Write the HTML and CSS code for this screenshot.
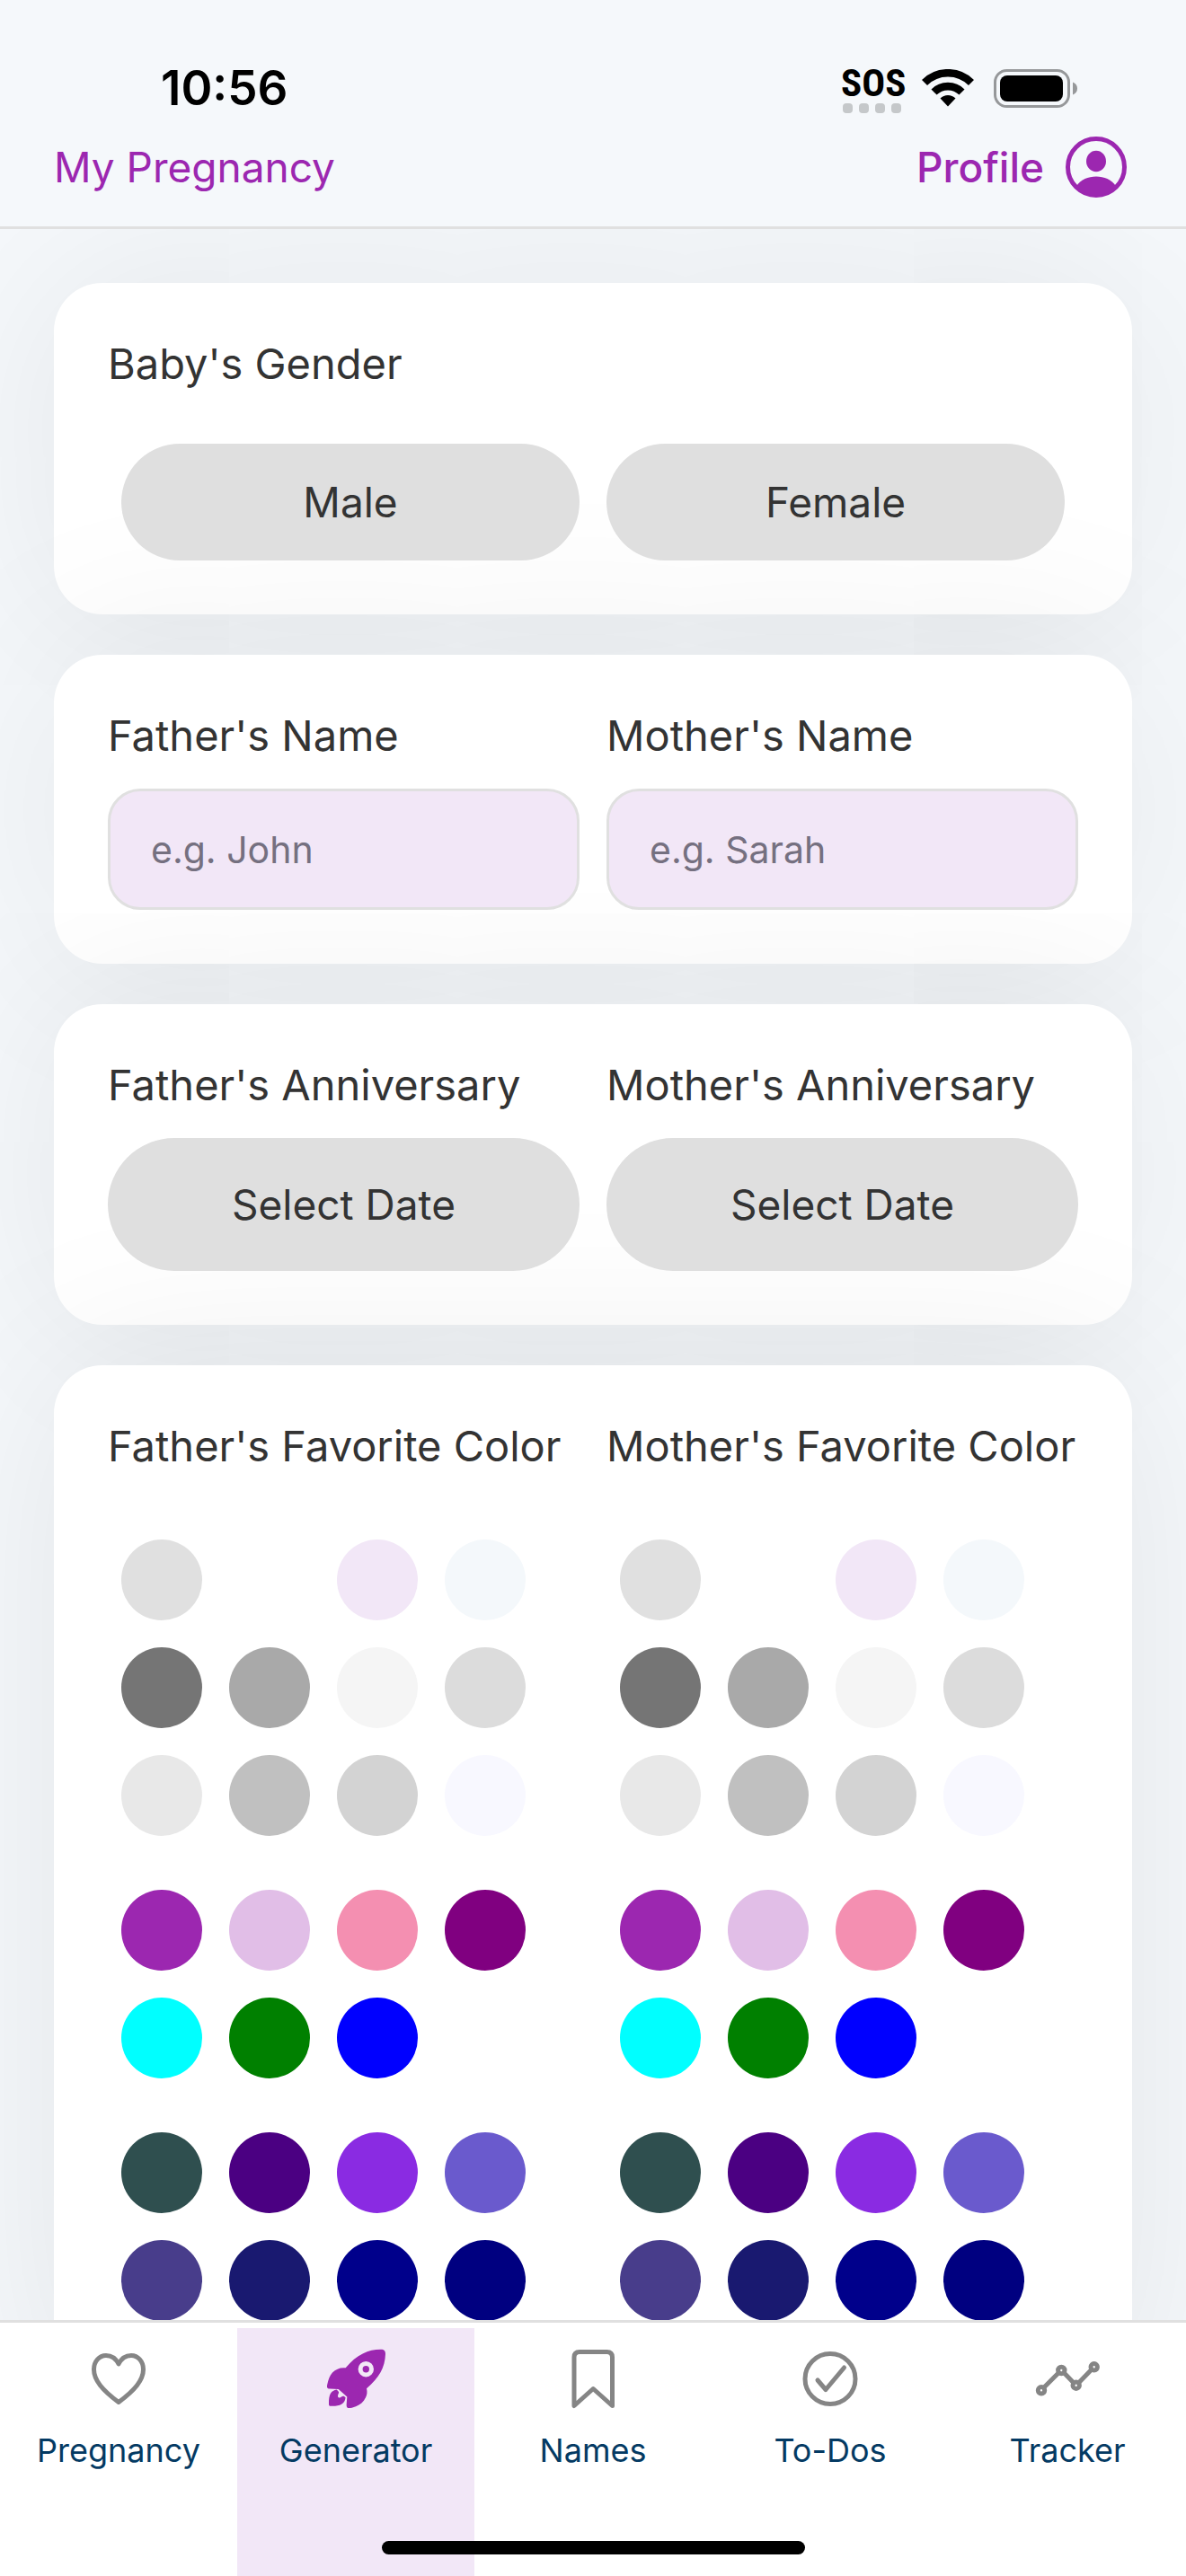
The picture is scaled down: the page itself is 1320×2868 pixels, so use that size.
FILE: index.html
```html
<!DOCTYPE html>
<html lang="en">
<head>
  <meta charset="utf-8">
  <meta name="viewport" content="width=device-width, initial-scale=1">
  <title>Generator</title>
  <link rel="stylesheet" href="styles.css">
</head>
<body>
<div class="app">
  <header class="header">
    <div class="status">
      <span class="clock">10:56</span>
      <div class="status-icons">
        <div class="sos">
          <span>SOS</span>
          <div class="dots"><i></i><i></i><i></i><i></i></div>
        </div>
        <svg class="wifi" width="58" height="42" viewBox="0 0 58 42">
          <path d="M3 15a36.8 36.8 0 0 1 52 0M13.5 25.5a22 22 0 0 1 31 0" fill="none" stroke="#000" stroke-width="8.6"/>
          <path d="M20.5 32.5a12 12 0 0 1 17 0L29 41.500z"/>
        </svg>
        <svg class="battery" width="94" height="43" viewBox="0 0 94 43">
          <rect x="1.500" y="1.500" width="82" height="40" rx="13" fill="none" stroke="#96989a" stroke-width="3"/>
          <rect x="7" y="7" width="70" height="29" rx="8"/>
          <path d="M88 14.500q5 2 5 7t-5 7z" fill="#96989a"/>
        </svg>
      </div>
    </div>
    <nav class="topnav">
      <a href="#">My Pregnancy</a>
      <a href="#" class="profile">Profile
        <svg width="68" height="68" viewBox="0 0 68 68">
          <circle cx="34" cy="34" r="31.500" fill="none" stroke="#9c27b0" stroke-width="5"/>
          <ellipse cx="34" cy="27.500" rx="11" ry="11.800" fill="#9c27b0"/>
          <path d="M12.500 54.500C17 48 25 44.500 34 44.500s17 3.500 21.500 10C50 62 42 66 34 66s-16-4-21.500-11.500z" fill="#9c27b0"/>
        </svg>
      </a>
    </nav>
  </header>

  <main class="content">
    <section class="card">
      <h2>Baby's Gender</h2>
      <div class="cols gender">
        <button class="pill">Male</button>
        <button class="pill">Female</button>
      </div>
    </section>

    <section class="card cols">
      <div>
        <label for="father-name">Father's Name</label>
        <input type="text" id="father-name" placeholder="e.g. John">
      </div>
      <div>
        <label for="mother-name">Mother's Name</label>
        <input type="text" id="mother-name" placeholder="e.g. Sarah">
      </div>
    </section>

    <section class="card cols">
      <div>
        <label for="father-date">Father's Anniversary</label>
        <button class="pill date" id="father-date">Select Date</button>
      </div>
      <div>
        <label for="mother-date">Mother's Anniversary</label>
        <button class="pill date" id="mother-date">Select Date</button>
      </div>
    </section>

    <section class="card cols">
      <div>
        <h2>Father's Favorite Color</h2>
        <div class="palettes">
          <div class="palette">
            <button class="swatch gray88" aria-label="Light gray"></button>
            <button class="swatch white" aria-label="White"></button>
            <button class="swatch lilac" aria-label="Lilac"></button>
            <button class="swatch ice" aria-label="Ice"></button>
            <button class="swatch gray46" aria-label="Gray"></button>
            <button class="swatch darkgray" aria-label="Dark gray"></button>
            <button class="swatch whitesmoke" aria-label="White smoke"></button>
            <button class="swatch gainsboro" aria-label="Gainsboro"></button>
            <button class="swatch gray91" aria-label="Platinum"></button>
            <button class="swatch silver" aria-label="Silver"></button>
            <button class="swatch lightgray" aria-label="Pale gray"></button>
            <button class="swatch ghostwhite" aria-label="Ghost white"></button>
          </div>
          <div class="palette">
            <button class="swatch primary" aria-label="Violet"></button>
            <button class="swatch orchid" aria-label="Light purple"></button>
            <button class="swatch pink" aria-label="Pink"></button>
            <button class="swatch purple" aria-label="Purple"></button>
            <button class="swatch cyan" aria-label="Cyan"></button>
            <button class="swatch green" aria-label="Green"></button>
            <button class="swatch blue" aria-label="Blue"></button>
          </div>
          <div class="palette">
            <button class="swatch slategray" aria-label="Dark slate gray"></button>
            <button class="swatch indigo" aria-label="Indigo"></button>
            <button class="swatch blueviolet" aria-label="Blue violet"></button>
            <button class="swatch slateblue" aria-label="Slate blue"></button>
            <button class="swatch darkslateblue" aria-label="Dark slate blue"></button>
            <button class="swatch midnight" aria-label="Midnight blue"></button>
            <button class="swatch darkblue" aria-label="Dark blue"></button>
            <button class="swatch navy" aria-label="Navy"></button>
          </div>
        </div>
      </div>
      <div>
        <h2>Mother's Favorite Color</h2>
        <div class="palettes">
          <div class="palette">
            <button class="swatch gray88" aria-label="Light gray"></button>
            <button class="swatch white" aria-label="White"></button>
            <button class="swatch lilac" aria-label="Lilac"></button>
            <button class="swatch ice" aria-label="Ice"></button>
            <button class="swatch gray46" aria-label="Gray"></button>
            <button class="swatch darkgray" aria-label="Dark gray"></button>
            <button class="swatch whitesmoke" aria-label="White smoke"></button>
            <button class="swatch gainsboro" aria-label="Gainsboro"></button>
            <button class="swatch gray91" aria-label="Platinum"></button>
            <button class="swatch silver" aria-label="Silver"></button>
            <button class="swatch lightgray" aria-label="Pale gray"></button>
            <button class="swatch ghostwhite" aria-label="Ghost white"></button>
          </div>
          <div class="palette">
            <button class="swatch primary" aria-label="Violet"></button>
            <button class="swatch orchid" aria-label="Light purple"></button>
            <button class="swatch pink" aria-label="Pink"></button>
            <button class="swatch purple" aria-label="Purple"></button>
            <button class="swatch cyan" aria-label="Cyan"></button>
            <button class="swatch green" aria-label="Green"></button>
            <button class="swatch blue" aria-label="Blue"></button>
          </div>
          <div class="palette">
            <button class="swatch slategray" aria-label="Dark slate gray"></button>
            <button class="swatch indigo" aria-label="Indigo"></button>
            <button class="swatch blueviolet" aria-label="Blue violet"></button>
            <button class="swatch slateblue" aria-label="Slate blue"></button>
            <button class="swatch darkslateblue" aria-label="Dark slate blue"></button>
            <button class="swatch midnight" aria-label="Midnight blue"></button>
            <button class="swatch darkblue" aria-label="Dark blue"></button>
            <button class="swatch navy" aria-label="Navy"></button>
          </div>
        </div>
      </div>
    </section>
  </main>

  <nav class="tabs">
    <a href="#">
      <svg viewBox="0 0 78 78"><path d="M39 65.500C21 52 11.500 41 11.500 29c0-9 6-15.500 13.500-15.500 6 0 11 3.500 14 9.500 3-6 8-9.500 14-9.500 7.500 0 13.500 6.500 13.500 15.500 0 12-9.500 23-27.500 36.500z"/></svg>
      Pregnancy
    </a>
    <a href="#" class="active">
      <svg viewBox="0 0 78 78">
        <path class="fill" fill-rule="evenodd" d="M27.700 27.300C40 12 54 6.500 67 6.700c3.500 0 5 1.500 5 5C71.500 27 65 38 51 50.300c1 4 .500 7-1 10-2.500 5-6 8-11 10-4 1.700-7.500 2-8.700 1.700-1.800-.500-1.800-3-1.500-6l.500-6.500L19.700 51 10 50.500c-3 0-3.500-1.500-2.700-5C8.500 40 10 36 13 32.500c4-4 9-6 14.700-5.200zM50.300 20a8.700 8.700 0 1 0 0 17.400 8.700 8.700 0 0 0 0-17.400z"/>
        <circle class="fill" cx="50.300" cy="28.700" r="3.700"/>
        <path class="fill" d="M17.700 51.500c-6 1-9 5-8.700 16 0 2 .500 2.500 3 2.300 9 .200 14.500-1.800 15.600-9.300-1.300-2-3-2.500-4.600-1-1.500 1.500-4 1.500-4-1 0-2 1.500-3 1-4.500z"/>
      </svg>
      Generator
    </a>
    <a href="#">
      <svg viewBox="0 0 78 78"><path d="M18 69.500V15.500q0-6 6-6h30.500q6 0 6 6v54L39.200 50.500z"/></svg>
      Names
    </a>
    <a href="#">
      <svg viewBox="0 0 78 78"><circle cx="39" cy="39.500" r="28"/><path d="M25 41l9 10.500 20.500-24.500"/></svg>
      To-Dos
    </a>
    <a href="#">
      <svg viewBox="0 0 78 78">
        <path d="M12.500 49.500l17-17M35 32.500l11 11.500M51.500 44L66 29"/>
        <circle cx="10" cy="52.300" r="3.700"/><circle cx="32.300" cy="30" r="3.700"/><circle cx="48.700" cy="46.700" r="3.700"/><circle cx="68.700" cy="26.300" r="3.700"/>
      </svg>
      Tracker
    </a>
    <div class="home-bar"></div>
  </nav>
</div>
</body>
</html>
```

FILE: styles.css
```css
* { box-sizing: border-box; }

body {
  margin: 0;
  background: #f5f8fb;
  color: #333;
  font-family: Inter, "Liberation Sans", sans-serif;
  font-size: 46px;
}

a { text-decoration: none; color: inherit; }
button, input { font: inherit; color: inherit; border: 0; padding: 0; margin: 0; }
svg { display: block; flex: none; }

.app { display: flex; flex-direction: column; height: 100vh; }

/* header */
.header {
  position: relative;
  z-index: 1;
  background: #f5f8fb;
  border-bottom: 3px solid #e0e0e0;
  padding: 66px 66px 32px 60px;
}
.status {
  display: flex;
  justify-content: space-between;
  align-items: center;
  height: 64px;
  padding: 0 54px 0 119px;
  color: #000;
}
.clock { font-size: 53px; font-weight: 600; line-height: 64px; }
.status-icons { display: flex; align-items: center; }
.sos { font-family: "Liberation Sans Narrow", "Roboto Condensed", "Liberation Sans", sans-serif; font-weight: 700; font-size: 43px; line-height: 38px; width: 69px; margin: 2px 21px 0 0; text-align: center; }
.sos span { display: block; }
.dots { display: flex; gap: 7px; justify-content: center; margin-top: 4px; }
.dots i { width: 11px; height: 11px; border-radius: 4px; background: #c5c8ca; }
.wifi { margin-right: 22px; }

.topnav {
  display: flex;
  justify-content: space-between;
  align-items: center;
  margin-top: 22px;
  color: #9c27b0;
}
.profile { display: flex; align-items: center; gap: 24px; font-weight: 500; }

/* form cards */
.content {
  flex: 1;
  min-height: 0;
  overflow-x: hidden;
  overflow-y: auto;
  scrollbar-width: none;
  padding: 60px;
}
.card {
  background: #fff;
  border-radius: 54px;
  padding: 60px;
  margin-bottom: 45px;
  box-shadow: 0 0 210px rgba(0, 0, 0, .08);
}
.cols { display: grid; grid-template-columns: 1fr 1fr; gap: 30px; }
.cols > div { min-width: 0; }
h2, label {
  display: block;
  margin: 0 0 30px;
  font-size: 47px;
  font-weight: 400;
  line-height: 59px;
  white-space: nowrap;
}
.gender { padding: 30px 15px 0; }
.pill {
  height: 130px;
  border-radius: 75px;
  background: #dfdfdf;
}
.date { width: 100%; height: 148px; display: block; }
input {
  display: block;
  width: 100%;
  height: 135px;
  padding: 0 45px;
  font-size: 41px;
  background: #f2e7f7;
  border: 3px solid #e0e0e0;
  border-radius: 36px;
}
input::placeholder { color: #757080; opacity: 1; }

/* color picker */
.palettes { padding-top: 30px; }
.palette {
  display: grid;
  grid-template-columns: repeat(4, 90px);
  gap: 30px;
  padding: 15px;
  margin-bottom: 30px;
}
.swatch { height: 90px; border-radius: 50%; }
.gray88 { background: #e0e0e0; }
.white { background: #fff; }
.lilac { background: #f2e7f7; }
.ice { background: #f4f8fb; }
.gray46 { background: #757575; }
.darkgray { background: #a9a9a9; }
.whitesmoke { background: #f5f5f5; }
.gainsboro { background: #dcdcdc; }
.gray91 { background: #e8e8e8; }
.silver { background: #c0c0c0; }
.lightgray { background: #d3d3d3; }
.ghostwhite { background: #f8f8ff; }
.primary { background: #9c27b0; }
.orchid { background: #e1bee7; }
.pink { background: #f48fb1; }
.purple { background: #800080; }
.cyan { background: #00ffff; }
.green { background: #008000; }
.blue { background: #0000ff; }
.slategray { background: #2f4f4f; }
.indigo { background: #4b0082; }
.blueviolet { background: #8a2be2; }
.slateblue { background: #6a5acd; }
.darkslateblue { background: #483d8b; }
.midnight { background: #191970; }
.darkblue { background: #00008b; }
.navy { background: #000080; }

/* bottom tabs */
.tabs {
  position: relative;
  z-index: 1;
  display: grid;
  grid-template-columns: repeat(5, 1fr);
  height: 285px;
  padding-top: 6px;
  background: #fff;
  border-top: 3px solid #e0e0e0;
}
.tabs a {
  display: flex;
  flex-direction: column;
  align-items: center;
  gap: 19px;
  padding-top: 17px;
  font-size: 36px;
  line-height: 44px;
  color: #043a63;
}
.tabs .active { background: #f2e7f7; }
.tabs svg {
  width: 78px;
  height: 78px;
  fill: none;
  stroke: #858585;
  stroke-width: 5;
  stroke-linecap: round;
  stroke-linejoin: round;
}
.tabs .fill { fill: #9c27b0; stroke: none; }
.home-bar {
  position: absolute;
  left: 50%;
  bottom: 24px;
  width: 471px;
  height: 15px;
  margin-left: -235px;
  border-radius: 8px;
  background: #000;
}
```
